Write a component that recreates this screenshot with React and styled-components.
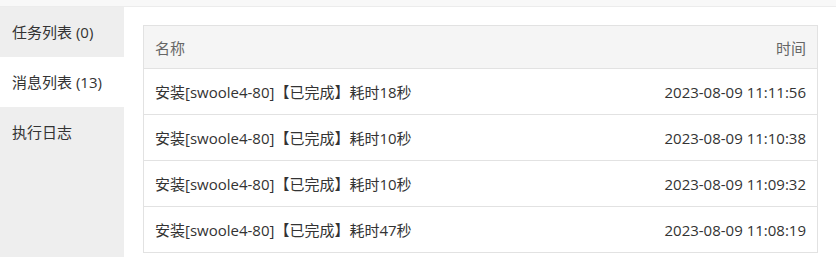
import React, { useState } from 'react';
import styled, { createGlobalStyle } from 'styled-components';

const GlobalStyle = createGlobalStyle`
  body {
    margin: 0;
    background: #fff;
    font-family: "Open Sans", "Noto Sans CJK SC", sans-serif;
  }
`;

const TopBar = styled.div`
  height: 6px;
  background: #f8f8f8;
  border-bottom: 1px solid #ececec;
`;

const Layout = styled.div`
  display: flex;
  height: 250px;
  overflow: hidden;
`;

const Sidebar = styled.div`
  width: 124px;
  flex-shrink: 0;
  background: #eeeeee;
  display: flex;
  flex-direction: column;
`;

const Tab = styled.div`
  height: 50px;
  line-height: 50px;
  padding-left: 12px;
  font-size: 15px;
  color: #333;
  cursor: pointer;
  background: ${({ active }) => (active ? '#fff' : 'transparent')};
`;

const Content = styled.div`
  flex: 1;
  padding: 18px 18px 0 19px;
`;

const Table = styled.table`
  width: 100%;
  border-collapse: collapse;
  border: 1px solid #e2e2e2;
  font-size: 15px;
  color: #333;
`;

const Th = styled.th`
  height: 42px;
  padding: 0 11px;
  background: #f5f5f5;
  border-bottom: 1px solid #e2e2e2;
  font-weight: normal;
  color: #666;
  text-align: ${({ right }) => (right ? 'right' : 'left')};
`;

const Td = styled.td`
  height: 45px;
  padding: 0 11px;
  border-bottom: 1px solid #e2e2e2;
  text-align: ${({ right }) => (right ? 'right' : 'left')};
  white-space: nowrap;
`;

const tabs = ['任务列表 (0)', '消息列表 (13)', '执行日志'];

const messages = [
  { name: '安装[swoole4-80]【已完成】耗时18秒', time: '2023-08-09 11:11:56' },
  { name: '安装[swoole4-80]【已完成】耗时10秒', time: '2023-08-09 11:10:38' },
  { name: '安装[swoole4-80]【已完成】耗时10秒', time: '2023-08-09 11:09:32' },
  { name: '安装[swoole4-80]【已完成】耗时47秒', time: '2023-08-09 11:08:19' },
];

const App = () => {
  const [active, setActive] = useState(1);

  return (
    <>
      <GlobalStyle />
      <TopBar />
      <Layout>
        <Sidebar>
          {tabs.map((t, i) => (
            <Tab key={t} active={i === active} onClick={() => setActive(i)}>
              {t}
            </Tab>
          ))}
        </Sidebar>
        <Content>
          <Table>
            <thead>
              <tr>
                <Th>名称</Th>
                <Th right>时间</Th>
              </tr>
            </thead>
            <tbody>
              {messages.map((m, i) => (
                <tr key={i}>
                  <Td>{m.name}</Td>
                  <Td right>{m.time}</Td>
                </tr>
              ))}
            </tbody>
          </Table>
        </Content>
      </Layout>
    </>
  );
};

export default App;
